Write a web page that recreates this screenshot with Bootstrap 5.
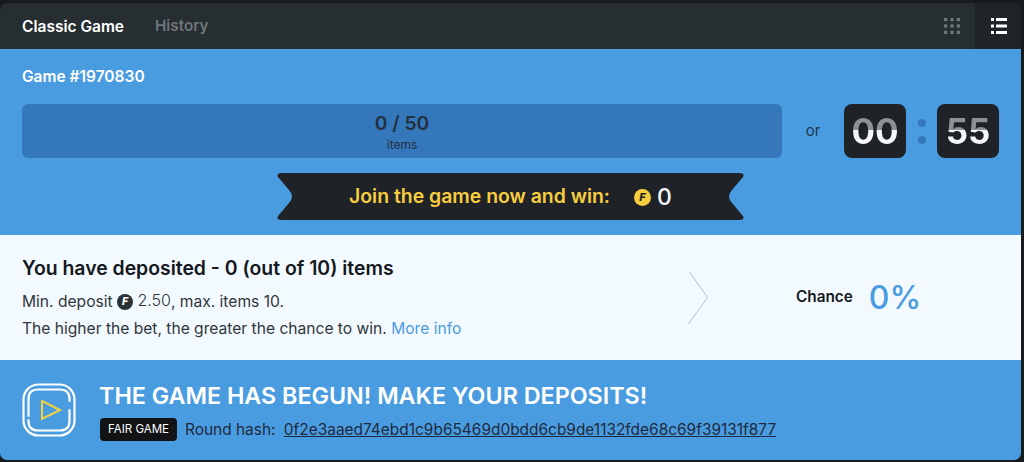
<!DOCTYPE html>
<html lang="en">

<head>
    <meta charset="UTF-8">
    <meta name="viewport" content="width=device-width, initial-scale=1.0">
    <title>Classic Game</title>
    <link href="https://cdn.jsdelivr.net/npm/bootstrap@5.3.0/dist/css/bootstrap.min.css" rel="stylesheet">
<style>
        body {
            background-color: #181b1e;
            font-family: Inter, "Liberation Sans", sans-serif;
            height: 462px;
            overflow: hidden;
        }

        /* Outer Panel */
        .game-panel {
            margin: 3px 3px 2px 0;
            height: 457px;
            border-radius: 7px;
            overflow: hidden;
        }

        /* Top Tabs */
        .game-tabs {
            height: 46px;
            background-color: #272e32;
        }
        .game-tab {
            font-size: 15.2px;
            font-weight: 600;
            color: #6f767c;
            text-decoration: none;
            padding-top: 1px;
        }
        .game-tab.is-on { color: #fff; font-size: 15.5px; }
        .tab-first { margin-left: 22px; margin-right: 31px; }
        .view-btn {
            width: 46px;
            height: 46px;
        }
        .view-btn.is-on { background-color: #1f2428; padding-left: 2px; }

        /* Blue Game Area */
        .game-top {
            height: 186px;
            background-color: #4a9ce0;
            padding: 19px 22px 0;
        }
        .game-no {
            font-size: 15.5px;
            font-weight: 600;
            color: #fff;
            line-height: 18px;
            margin-bottom: 18px;
        }
        .items-bar {
            width: 760px;
            height: 54px;
            background-color: #3577bb;
            border-radius: 6px;
            color: #22303f;
        }
        .items-count { font-size: 19.2px; font-weight: 600; line-height: 23px; margin-top: 8px; }
        .items-label { font-size: 12px; line-height: 15px; margin-top: 2px; }
        .or-text { width: 62px; font-size: 15px; color: #24384f; text-align: center; }
        .timer-box {
            width: 62px;
            height: 54px;
            background-color: #1f2327;
            border-radius: 8px;
            font-size: 35px;
            font-weight: 700;
            line-height: 54px;
            text-align: center;
        }
        .timer-digits {
            background: linear-gradient(#8c9196 0 26px, #f4f6fb 26px);
            background-size: 100% 54px;
            -webkit-background-clip: text;
            background-clip: text;
            color: transparent;
            display: block;
        }
        .timer-sep { width: 31px; gap: 9px; }
        .timer-dot { width: 8px; height: 8px; border-radius: 50%; background-color: #3577bb; }

        /* Ribbon */
        .win-ribbon {
            width: 467px;
            height: 47px;
            margin: 15px auto 0;
            padding-top: 1px;
            background-color: #1f2327;
            clip-path: path("M5 0H462Q468 0 466 4L455 17Q449 23.500 455 30L466 43Q468 47 462 47H5Q-1 47 1 43L12 30Q18 23.500 12 17L1 4Q-1 0 5 0Z");
        }
        .win-text { font-size: 19.400px; font-weight: 600; color: #f8ce3f; margin-right: 24px; }
        .win-value { font-size: 23px; font-weight: 500; color: #f4f6fb; margin-left: 6px; }

        /* F Coin */
        .coin-mark {
            display: inline-flex;
            align-items: center;
            justify-content: center;
            border-radius: 50%;
            font-weight: 800;
            font-style: italic;
        }
        .coin-gold { width: 17px; height: 17px; background-color: #f8ce3f; color: #1f2327; font-size: 11px; }
        .coin-dark { width: 16px; height: 16px; background-color: #2b3237; color: #fff; font-size: 10.500px; vertical-align: 2px; }

        /* Deposit Area */
        .deposit-info {
            height: 125px;
            background-color: #f3faff;
        }
        .deposit-text { width: 688px; padding: 21px 0 0 22px; }
        .deposit-title { font-size: 19.400px; font-weight: 600; color: #14181c; line-height: 24px; margin-bottom: 7px; }
        .deposit-line { font-size: 15.600px; color: #30363c; line-height: 27px; }
        .deposit-amount { font-size: 16px; font-weight: 300; vertical-align: 1px; }
        .more-link { color: #4a9ce0; text-decoration: none; }
        .chance-label { font-size: 15.300px; font-weight: 600; color: #14181c; }
        .chance-value { font-size: 32px; font-weight: 500; color: #4a9ce0; line-height: 38px; margin-left: 16px; }
        .chance-wrap { margin-left: 86px; }

        /* Bottom Area */
        .game-status {
            height: 100px;
            background-color: #4a9ce0;
            padding-left: 22px;
        }
        .status-body { margin-left: 24px; margin-top: 4px; }
        .status-title { font-size: 23.300px; font-weight: 600; color: #fff; line-height: 27px; margin: 0 0 9px -1px; }
        .fair-tag {
            background-color: #111315;
            color: #fff;
            font-size: 11.500px;
            font-weight: 400;
            border-radius: 4px;
            padding: 0 8px;
            line-height: 23px;
            margin-right: 8px;
        }
        .hash-text { font-size: 15.450px; color: #1f2a3d; }
        .hash-link { color: #1f2a3d; margin-left: 4px; }
    </style>
</head>

<body>
    <div class="game-panel d-flex flex-column">

        <!-- Tabs -->
        <div class="game-tabs d-flex align-items-center">
            <a href="#" class="game-tab is-on tab-first">Classic Game</a>
            <a href="#" class="game-tab">History</a>
            <div class="view-btn d-flex align-items-center justify-content-center ms-auto">
                <svg width="16" height="16" viewBox="0 0 16 16" fill="#70767b">
                    <rect x="0" y="0" width="3.2" height="3.2"/><rect x="6.4" y="0" width="3.2" height="3.2"/><rect x="12.8" y="0" width="3.2" height="3.2"/>
                    <rect x="0" y="6.4" width="3.2" height="3.2"/><rect x="6.4" y="6.4" width="3.2" height="3.2"/><rect x="12.8" y="6.4" width="3.2" height="3.2"/>
                    <rect x="0" y="12.8" width="3.2" height="3.2"/><rect x="6.4" y="12.8" width="3.2" height="3.2"/><rect x="12.8" y="12.8" width="3.2" height="3.2"/>
                </svg>
            </div>
            <div class="view-btn is-on d-flex align-items-center justify-content-center">
                <svg width="16" height="16" viewBox="0 0 16 16" fill="#fff">
                    <rect x="0" y="0" width="3" height="3"/><rect x="5" y="0" width="11" height="3"/>
                    <rect x="0" y="6.5" width="3" height="3"/><rect x="5" y="6.5" width="11" height="3"/>
                    <rect x="0" y="13" width="3" height="3"/><rect x="5" y="13" width="11" height="3"/>
                </svg>
            </div>
        </div>

        <!-- Game -->
        <div class="game-top">
            <div class="game-no">Game #1970830</div>
            <div class="d-flex align-items-center">
                <div class="items-bar text-center">
                    <div class="items-count">0 / 50</div>
                    <div class="items-label">items</div>
                </div>
                <div class="or-text">or</div>
                <div class="timer-box"><span class="timer-digits">00</span></div>
                <div class="timer-sep d-flex flex-column align-items-center">
                    <div class="timer-dot"></div>
                    <div class="timer-dot"></div>
                </div>
                <div class="timer-box"><span class="timer-digits">55</span></div>
            </div>
            <div class="win-ribbon d-flex align-items-center justify-content-center">
                <span class="win-text">Join the game now and win:</span>
                <span class="coin-mark coin-gold">F</span>
                <span class="win-value">0</span>
            </div>
        </div>

        <!-- Deposit -->
        <div class="deposit-info d-flex align-items-center">
            <div class="deposit-text align-self-start">
                <div class="deposit-title">You have deposited - 0 (out of 10) items</div>
                <div class="deposit-line">Min. deposit <span class="coin-mark coin-dark">F</span> <span class="deposit-amount">2.50</span>, max. items 10.</div>
                <div class="deposit-line">The higher the bet, the greater the chance to win. <a href="#" class="more-link">More info</a></div>
            </div>
            <svg width="22" height="54" viewBox="0 0 22 54" fill="none" stroke="#b9bec2">
                <polyline points="1.5,1 19.5,26.5 0.5,53"/>
            </svg>
            <div class="chance-wrap d-flex align-items-center">
                <span class="chance-label">Chance</span>
                <span class="chance-value">0%</span>
            </div>
        </div>

        <!-- Status -->
        <div class="game-status d-flex align-items-center">
            <svg width="54" height="54" viewBox="0 0 54 54" fill="none" stroke="#fff" stroke-width="2.2" stroke-linecap="round">
                <rect x="1.5" y="1.5" width="51" height="51" rx="15"/>
                <path d="M6.500 33V16Q6.500 6.500 16 6.500H38Q47.500 6.500 47.500 16V18"/>
                <path d="M47.500 27V38Q47.500 47.500 38 47.500H16Q6.500 47.500 6.500 38V37"/>
                <polygon points="20,18 38,27 20,36" stroke="#f6d13f" stroke-width="2"/>
            </svg>
            <div class="status-body">
                <div class="status-title">THE GAME HAS BEGUN! MAKE YOUR DEPOSITS!</div>
                <div class="d-flex align-items-center">
                    <span class="fair-tag">FAIR GAME</span>
                    <span class="hash-text">Round hash: <a href="#" class="hash-link">0f2e3aaed74ebd1c9b65469d0bdd6cb9de1132fde68c69f39131f877</a></span>
                </div>
            </div>
        </div>

    </div>

    <script src="https://cdn.jsdelivr.net/npm/bootstrap@5.3.0/dist/js/bootstrap.bundle.min.js"></script>
</body>

</html>
